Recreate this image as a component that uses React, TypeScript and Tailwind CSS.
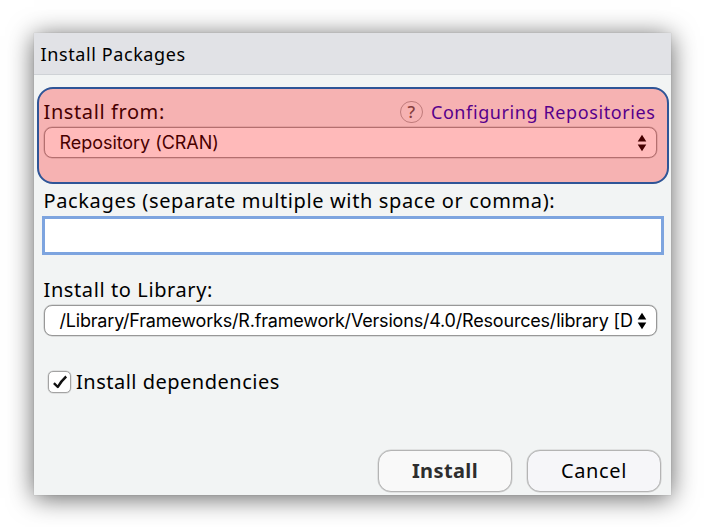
import React from "react";

const label = "font-['Noto_Sans',sans-serif] text-[20px] leading-[28px] whitespace-nowrap text-black";

function Arrows() {
  return (
    <svg className="h-[18px] w-[10px] shrink-0" viewBox="0 0 10 18" aria-hidden="true">
      <path d="M5 0.7 9.3 7.5H0.7Z M5 17.3 9.3 10.5H0.7Z" fill="#000" />
    </svg>
  );
}

function Select({ text, spacing }: { text: string; spacing: string }) {
  return (
    <div className="flex h-[31px] w-[613px] items-center rounded-[8px] border border-[#989898] bg-white pr-[9px] pl-[15px] shadow-[0_0_0_0.5px_rgba(0,0,0,0.2)]">
      <span
        className={`font-[Inter,sans-serif] text-[18px] leading-[26px] whitespace-nowrap text-black ${spacing}`}
      >
        {text}
      </span>
      <span className="ml-auto flex">
        <Arrows />
      </span>
    </div>
  );
}

export default function App() {
  return (
    <div className="h-[527px] w-[704px] overflow-hidden bg-white pt-[33px] pl-[34px]">
      <div className="relative flex h-[462px] w-[637px] flex-col bg-[#f2f4f4] shadow-[0_0_1px_rgba(0,0,0,0.2),0_3px_24px_rgba(0,0,0,0.62)]">
        <div className="flex h-[42px] shrink-0 items-center border-b border-[#cfd2d6] bg-[#e1e2e6] pl-[6.5px]">
          <h1 className="font-['Noto_Sans',sans-serif] text-[18px] leading-[26px] tracking-[0.6px] text-black">
            Install Packages
          </h1>
        </div>

        <div className="flex flex-col pt-[22px] pl-[9.5px]">
          <div className="mb-px flex h-[29px] w-[612px] items-center">
            <span className={`${label} tracking-[0.6px]`}>Install from:</span>
            <span className="ml-auto flex h-[22px] w-[23px] items-center justify-center rounded-full border border-[#a8a8a8] font-['Noto_Sans',sans-serif] text-[17px] leading-none font-medium text-[#555]">
              ?
            </span>
            <a className="ml-[8px] font-['Noto_Sans',sans-serif] text-[18px] leading-[26px] tracking-[0.6px] whitespace-nowrap text-[#1400c0]">
              Configuring Repositories
            </a>
          </div>
          <Select text="Repository (CRAN)" spacing="tracking-[-0.05px]" />
          <span className={`${label} mt-[29px] tracking-[0.63px]`}>
            Packages (separate multiple with space or comma):
          </span>
          <div className="-ml-[1.5px] mt-px h-[39px] w-[622px] border-[3px] border-[#7da4df] bg-white" />
          <span className={`${label} mt-[21px] mb-px tracking-[0.6px]`}>Install to Library:</span>
          <Select
            text="/Library/Frameworks/R.framework/Versions/4.0/Resources/library [D"
            spacing="tracking-[-0.19px]"
          />
          <div className="mt-[32px] flex items-center pl-[4.5px]">
            <span className="flex h-[22px] w-[23px] items-center justify-center rounded-[5px] border border-[#a3a3a3] bg-white shadow-[0_0_0_0.5px_rgba(0,0,0,0.15)]">
              <svg className="h-[16px] w-[18px]" viewBox="0 0 18 16" fill="none" aria-hidden="true">
                <path
                  d="M2.9 9.2 6.8 13 Q10 7.2 15.2 2.5"
                  stroke="#111"
                  strokeWidth="2.4"
                  strokeLinejoin="round"
                />
              </svg>
            </span>
            <span className={`${label} ml-[5px] tracking-[0.5px]`}>Install dependencies</span>
          </div>
        </div>

        <div className="mt-auto flex gap-[15px] self-end pr-[10px] pb-[3px]">
          <button className="h-[42px] w-[134px] rounded-[13px] border border-[#b4b4b4] bg-[#f9f9f9] font-['Noto_Sans',sans-serif] text-[20px] font-bold tracking-[0.4px] text-[#2e2e2e] shadow-[0_0_0_0.5px_rgba(0,0,0,0.15)]">
            Install
          </button>
          <button className="h-[42px] w-[134px] rounded-[13px] border border-[#b4b4b4] bg-[#f6f6f9] font-['Noto_Sans',sans-serif] text-[20px] tracking-[0.6px] text-black shadow-[0_0_0_0.5px_rgba(0,0,0,0.15)]">
            Cancel
          </button>
        </div>

        <div className="absolute top-[54px] left-[3px] h-[97px] w-[632px] rounded-[16px] border-2 border-[#2f5597] bg-[#ff0000]/27" />
      </div>
    </div>
  );
}
